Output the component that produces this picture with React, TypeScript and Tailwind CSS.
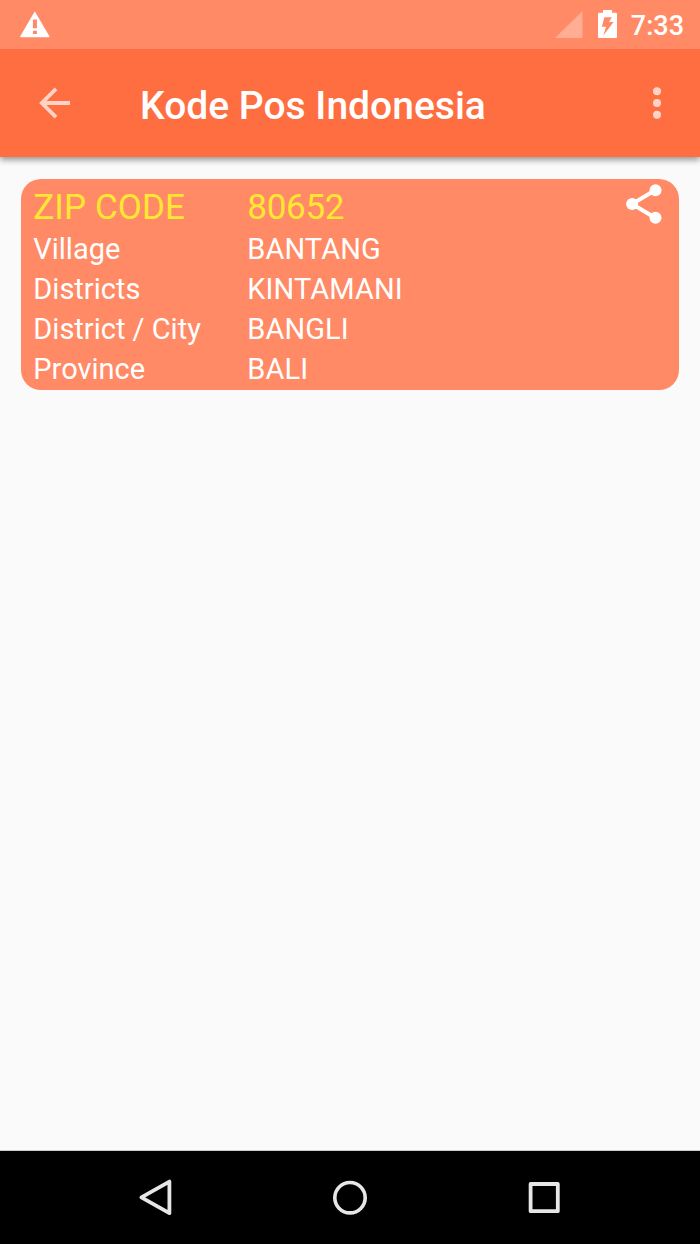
import React from 'react';

const rows = [
  { label: 'Village', value: 'BANTANG' },
  { label: 'Districts', value: 'KINTAMANI' },
  { label: 'District / City', value: 'BANGLI' },
  { label: 'Province', value: 'BALI' },
];

const StatusBar: React.FC = () => (
  <div className="z-20 flex h-[49px] shrink-0 items-center bg-[#ff8a65] pl-5 pr-4 text-white">
    <svg className="h-[27px] w-[30px]" viewBox="0 0 30 27" fill="currentColor">
      <path
        fillRule="evenodd"
        d="M14.8 0.2 29.4 25.2Q30 26.3 28.8 26.3H0.9Q-0.3 26.3 0.3 25.2ZM12.9 8.5V17.3H16.9V8.5ZM12.9 19.7V23H16.9V19.7Z"
      />
    </svg>
    <svg className="ml-auto h-[27px] w-[28px]" viewBox="0 0 28 27">
      <path d="M27.5 0V27H0Z" fill="white" fillOpacity="0.3" />
    </svg>
    <svg className="mb-0.5 ml-[15px] h-[28px] w-[19px]" viewBox="0 0 19 28" fill="currentColor">
      <path
        fillRule="evenodd"
        d="M5 0H14V2.7H17.8Q19 2.7 19 4V26.8Q19 28 17.8 28H1.2Q0 28 0 26.8V4Q0 2.7 1.2 2.7H5ZM6.4 7.2 3.8 16.8H8L5.3 25.4 15.6 12.1H11L13.8 7.2Z"
      />
    </svg>
    <span className="ml-[14px] mt-[3px] text-[27px] font-medium leading-none">7:33</span>
  </div>
);

const AppBar: React.FC = () => (
  <header className="z-10 flex h-[108px] shrink-0 items-center bg-[#ff6e40] shadow-[0_3px_6px_rgba(0,0,0,0.4)]">
    <button className="ml-[39px]" aria-label="Back">
      <svg
        className="h-8 w-8"
        viewBox="0 0 32 32"
        fill="none"
        stroke="white"
        strokeOpacity="0.7"
        strokeWidth="3.8"
      >
        <path d="M31 16H3.5M17 1.8 2.8 16 17 30.2" />
      </svg>
    </button>
    <h1 className="ml-[69px] mt-[7px] text-[39px] font-medium leading-none text-white">Kode Pos Indonesia</h1>
    <button className="ml-auto mr-[39px]" aria-label="More options">
      <svg className="h-8 w-2" viewBox="0 0 8 32" fill="white" fillOpacity="0.7">
        <circle cx="4" cy="4.2" r="4" />
        <circle cx="4" cy="15.9" r="4" />
        <circle cx="4" cy="27.7" r="4" />
      </svg>
    </button>
  </header>
);

const ZipCard: React.FC = () => (
  <section className="flex h-[210.5px] justify-between rounded-[20px] bg-[#ff8a65] pl-3 pr-[16.5px] text-[29px] leading-[40px] text-white">
    <dl>
      <div className="flex h-[50px] items-center pt-[7px] text-[35px] text-[#ffe733]">
        <dt className="w-[214px] tracking-[0.1px]">ZIP CODE</dt>
        <dd className="tracking-[-0.3px]">80652</dd>
      </div>
      {rows.map((row) => (
        <div key={row.label} className="flex h-10 items-center">
          <dt className="w-[214px]">{row.label}</dt>
          <dd className="tracking-[0.1px]">{row.value}</dd>
        </div>
      ))}
    </dl>
    <button className="mt-[5px] self-start" aria-label="Share">
      <svg className="h-10 w-9" viewBox="0 0 36 40" fill="white">
        <path d="M29.5 6 6 20 29.5 34" fill="none" stroke="white" strokeWidth="4" />
        <circle cx="29.5" cy="6.2" r="6" />
        <circle cx="6.1" cy="20" r="6" />
        <circle cx="29.5" cy="33.7" r="6" />
      </svg>
    </button>
  </section>
);

const NavBar: React.FC = () => (
  <nav className="flex h-[93px] shrink-0 items-center justify-between bg-black px-[138px] text-[#e6e6e6]">
    <svg
      className="h-[38px] w-[36px]"
      viewBox="0 0 36 38"
      fill="none"
      stroke="currentColor"
      strokeWidth="3.8"
      strokeLinejoin="round"
    >
      <path d="M31.4 2.6V34.2L3.4 18.4Z" />
    </svg>
    <svg className="h-9 w-9" viewBox="0 0 36 36" fill="none" stroke="currentColor" strokeWidth="3.6">
      <circle cx="18" cy="17.7" r="15.2" />
    </svg>
    <svg className="h-9 w-9" viewBox="0 0 36 36" fill="none" stroke="currentColor" strokeWidth="3.8" strokeLinejoin="round">
      <rect x="4.6" y="4" width="27.2" height="27.2" />
    </svg>
  </nav>
);

export default function App() {
  return (
    <div className="flex h-[1244px] w-[700px] flex-col bg-[#fafafa] font-['Roboto',sans-serif]">
      <StatusBar />
      <AppBar />
      <main className="flex-1 border-b border-[#c8cccc] pl-[21.3px] pr-[21.2px] pt-[22px]">
        <ZipCard />
      </main>
      <NavBar />
    </div>
  );
}
